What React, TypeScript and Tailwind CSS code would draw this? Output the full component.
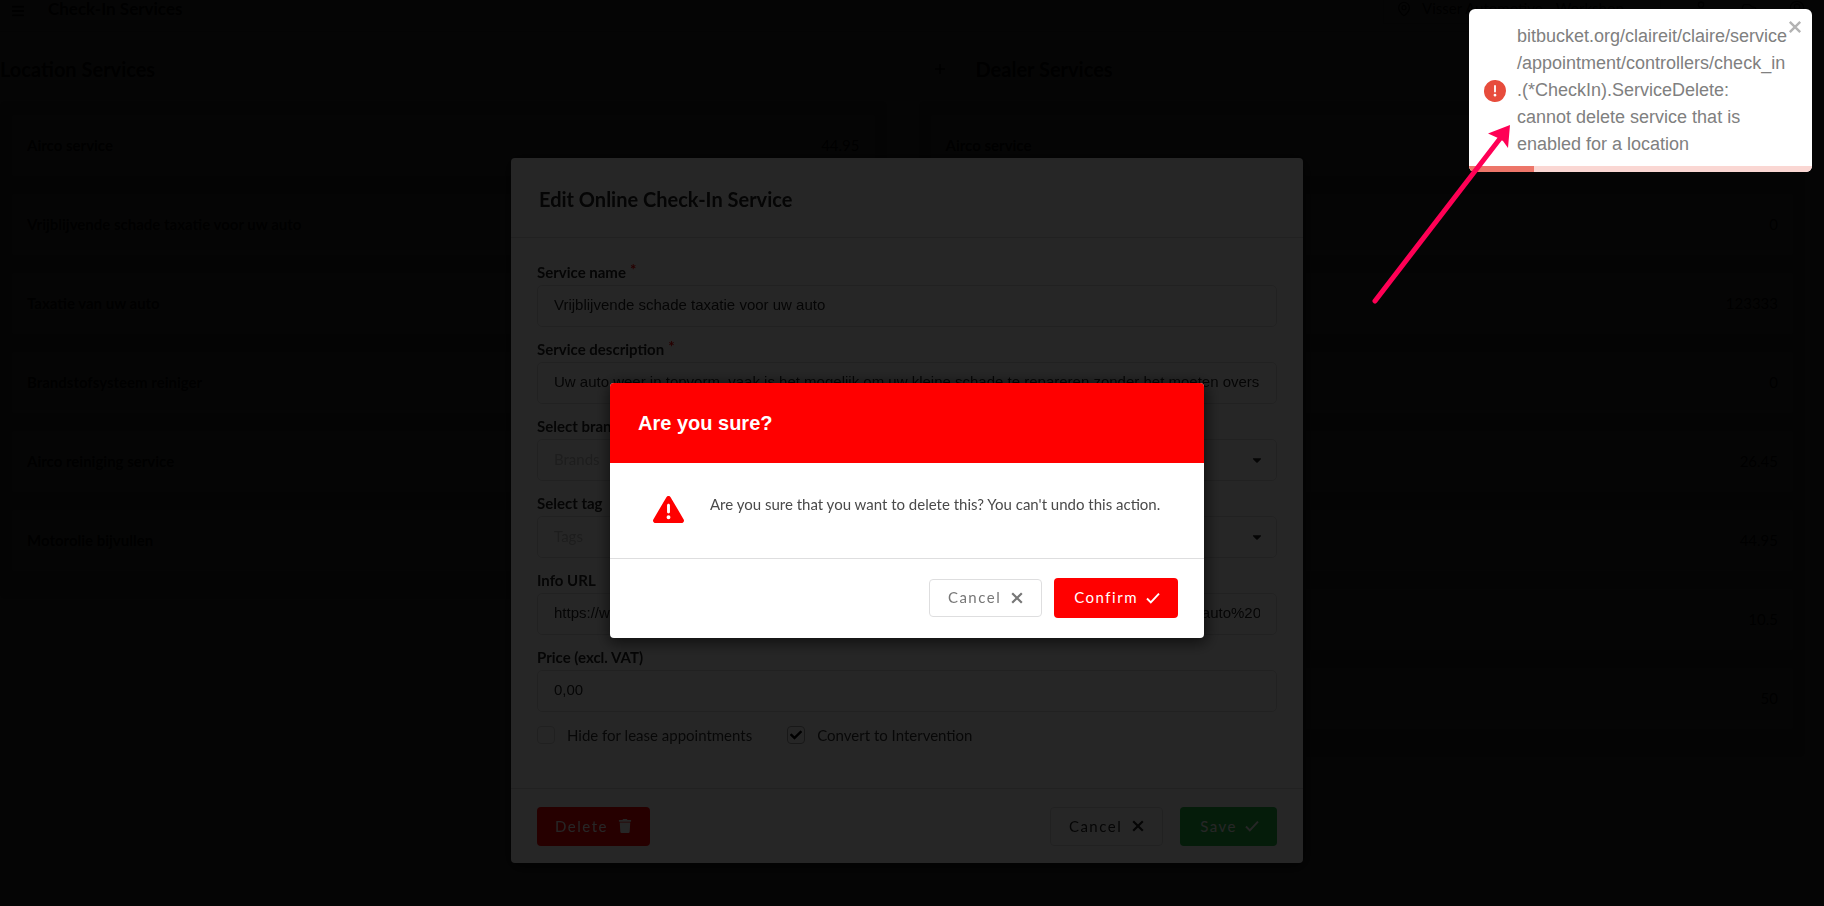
import React from "react";
import { FaCheck, FaTrash, FaBars, FaCaretDown } from "react-icons/fa";
import { FaTriangleExclamation } from "react-icons/fa6";
import { MapPin, Plus, User, Car, CircleUserRound } from "lucide-react";

type Service = { name: string; price: string };

const locationServices: Service[] = [
  { name: "Airco service", price: "44.95" },
  { name: "Vrijblijvende schade taxatie voor uw auto", price: "0" },
  { name: "Taxatie van uw auto", price: "123333" },
  { name: "Brandstofsysteem reiniger", price: "0" },
  { name: "Airco reiniging service", price: "26.45" },
  { name: "Motorolie bijvullen", price: "" },
];

const dealerServices: Service[] = [
  { name: "Airco service", price: "44.95" },
  { name: "Vrijblijvende schade taxatie", price: "0" },
  { name: "Taxatie van uw auto", price: "123333" },
  { name: "Brandstofsysteem", price: "0" },
  { name: "Airco reiniging service", price: "26.45" },
  { name: "Motorolie bijvullen", price: "44.95" },
  { name: "Ruitenwissers", price: "10.5" },
  { name: "Wielwissel", price: "50" },
];

function CrossIcon() {
  return (
    <svg viewBox="0 0 12 12" className="size-3" aria-hidden="true">
      <path d="M1.2 1.2l9.6 9.6M10.8 1.2l-9.6 9.6" stroke="currentColor" strokeWidth="2.2" />
    </svg>
  );
}

function TickIcon() {
  return (
    <svg viewBox="0 0 14 12" className="h-3 w-3.5" aria-hidden="true">
      <path d="M1 6.5l3.8 3.8L13 1.6" stroke="currentColor" strokeWidth="1.9" fill="none" />
    </svg>
  );
}

function ServiceList({ items }: { items: Service[] }) {
  return (
    <ul className="flex flex-col gap-[18px] rounded bg-[#d4d4d5] px-3 pt-[14px] pb-7">
      {items.map((s) => (
        <li key={s.name} className="flex h-[61px] items-center justify-between rounded bg-white px-[15px] text-[15px] font-bold">
          <span>{s.name}</span>
          <span className="font-normal">{s.price}</span>
        </li>
      ))}
    </ul>
  );
}

function Page() {
  return (
    <div className="min-h-screen bg-white text-black">
      <header className="flex h-8 items-start justify-between border-b border-[#d4d4d5] pr-[19px] pl-[11px]">
        <div className="flex items-center gap-[23px]">
          <button type="button" aria-label="Menu" className="pt-[3px]">
            <FaBars size={14} />
          </button>
          <h1 className="text-[17px] leading-[18px] font-bold">Check-In Services</h1>
        </div>
        <div className="flex items-start gap-8">
          <button type="button" className="flex h-6 w-[278px] items-center gap-2.5 border border-t-0 border-[#d4d4d5] px-3 pb-1.5 text-[15px] whitespace-nowrap">
            <MapPin size={16} />
            Visser Automotive - Workshop
          </button>
          <User size={16} />
          <Car size={16} />
          <CircleUserRound size={16} />
        </div>
      </header>
      <main className="grid grid-cols-2 gap-8 pr-[19px]">
        <section>
          <div className="flex h-[69px] items-center pt-1">
            <h2 className="text-[20px] font-bold">Location Services</h2>
          </div>
          <ServiceList items={locationServices} />
        </section>
        <section>
          <div className="flex h-[69px] items-center gap-[14px] pt-1">
            <button type="button" aria-label="Add service" className="flex h-[37px] w-[43px] items-center justify-center rounded border border-[#e8e8e8]">
              <Plus size={16} />
            </button>
            <h2 className="text-[20px] font-bold">Dealer Services</h2>
          </div>
          <ServiceList items={dealerServices} />
        </section>
      </main>
    </div>
  );
}

const inputClass =
  "h-[42px] w-full rounded-[5px] border border-[#dededf] bg-white px-4 pb-[3px] font-['Liberation_Sans',sans-serif] text-[15px] text-[#222] outline-none";
const labelClass = "mb-[3px] block h-5 text-[15px] leading-5 font-bold text-[#222]";

function TextField({ id, label, value, required }: { id: string; label: string; value: string; required?: boolean }) {
  return (
    <div>
      <label htmlFor={id} className={labelClass}>
        {label}
        {required && <span className="ml-1 align-[3px] leading-none text-[#ff0000]">*</span>}
      </label>
      <input id={id} type="text" defaultValue={value} className={inputClass} />
    </div>
  );
}

function SelectField({ id, label, placeholder }: { id: string; label: string; placeholder: string }) {
  return (
    <div>
      <label htmlFor={id} className={labelClass}>{label}</label>
      <div className="relative">
        <select id={id} className="h-[42px] w-full appearance-none rounded-[5px] border border-[#dededf] bg-white px-4 pb-[2px] text-[15px] text-[#bfbfbf] outline-none">
          <option>{placeholder}</option>
        </select>
        <FaCaretDown size={14} className="pointer-events-none absolute top-3.5 right-[13px] text-[#222]" />
      </div>
    </div>
  );
}

function CheckField({ label, checked }: { label: string; checked?: boolean }) {
  return (
    <label className="flex items-center gap-3 text-[15px] leading-5 text-[#333]">
      <span className="relative flex size-[18px]">
        <input type="checkbox" defaultChecked={checked} className="peer size-[18px] appearance-none rounded-[4px] border border-[#d4d4d5] checked:border-[#a0a0a0]" />
        <FaCheck size={12} className="pointer-events-none absolute top-[3px] left-[3px] hidden text-black peer-checked:block" />
      </span>
      {label}
    </label>
  );
}

const URL_VALUE =
  "https://www.visserautomotive.nl/werkplaatsen/schadeherstel/vrijblijvende-schade-taxatie-voor-uw-auto%20";

function EditModal() {
  return (
    <form className="flex w-[792px] flex-col rounded bg-white shadow-[1px_3px_15px_2px_rgba(0,0,0,0.6)]">
      <h2 className="flex h-20 items-center border-b border-[#dededf] px-7 pt-[3px] text-[20px] font-bold text-[#222]">Edit Online Check-In Service</h2>
      <div className="flex flex-col px-[26px] pt-6">
        <div className="flex flex-col gap-3">
          <TextField id="name" label="Service name" value="Vrijblijvende schade taxatie voor uw auto" required />
          <TextField
            id="description"
            label="Service description"
            value="Uw auto weer in topvorm, vaak is het mogelijk om uw kleine schade te repareren zonder het moeten overspuiten"
            required
          />
          <SelectField id="brands" label="Select brands" placeholder="Brands" />
          <SelectField id="tags" label="Select tag" placeholder="Tags" />
          <TextField id="url" label="Info URL" value={URL_VALUE} />
          <TextField id="price" label="Price (excl. VAT)" value="0,00" />
        </div>
        <div className="flex h-[76px] gap-[35px] pt-[13px]">
          <div><CheckField label="Hide for lease appointments" /></div>
          <div><CheckField label="Convert to Intervention" checked /></div>
        </div>
      </div>
      <div className="flex h-[75px] items-center justify-between border-t border-[#dededf] px-[26px]">
        <button type="button" className="flex h-[39px] items-center gap-2.5 rounded bg-[#ff0000] px-[18px] text-[15px] tracking-widest text-white">
          Delete <FaTrash size={14} />
        </button>
        <div className="flex gap-[17px]">
          <button type="button" className="flex h-[39px] items-center gap-2.5 rounded border border-[#dededf] px-[18px] text-[15px] tracking-widest text-[#222]">
            Cancel <CrossIcon />
          </button>
          <button type="submit" className="flex h-[39px] items-center gap-2 rounded bg-[#21ba45] pr-[18px] pl-5 text-[15px] tracking-widest text-white">
            Save <TickIcon />
          </button>
        </div>
      </div>
    </form>
  );
}

function ConfirmModal() {
  return (
    <div role="alertdialog" aria-labelledby="confirm-title" className="w-[594px] overflow-hidden rounded bg-white shadow-[1px_3px_15px_2px_rgba(0,0,0,0.6)]">
      <h2 id="confirm-title" className="flex h-20 items-center bg-[#ff0000] px-7 font-['Liberation_Sans',sans-serif] text-[20px] font-bold text-white">
        Are you sure?
      </h2>
      <div className="flex h-[95px] items-start gap-[26px] pt-[31px] pl-[43px]">
        <FaTriangleExclamation size={31} className="text-[#ff0000]" />
        <p className="text-[15px] leading-5 text-[#4a4a4a]">Are you sure that you want to delete this? You can't undo this action.</p>
      </div>
      <div className="flex h-20 items-center justify-end gap-3 border-t border-[#dededf] px-[26px] pb-[2px]">
        <button type="button" className="flex h-[38px] items-center gap-2.5 rounded border border-[#dededf] px-[18px] text-[15px] tracking-widest text-[#777]">
          Cancel <CrossIcon />
        </button>
        <button type="button" className="flex h-10 items-center gap-2 rounded bg-[#ff0000] pr-[18px] pl-5 text-[15px] tracking-widest text-white">
          Confirm <TickIcon />
        </button>
      </div>
    </div>
  );
}

function Toast() {
  return (
    <div role="alert" className="fixed top-[9px] right-3 z-30 w-[343px] overflow-hidden rounded-md bg-white font-['Liberation_Sans',sans-serif]">
      <div className="flex items-center gap-[11px] pt-[14px] pb-2 pl-[15px]">
        <svg viewBox="0 0 24 24" className="size-[22px] shrink-0 fill-[#e74c3c]">
          <path d="M11.983 0a12.206 12.206 0 00-8.51 3.653A11.8 11.8 0 000 12.207 11.779 11.779 0 0011.8 24h.214A12.111 12.111 0 0024 11.791 11.766 11.766 0 0011.983 0zM10.5 16.542a1.476 1.476 0 011.449-1.53h.027a1.527 1.527 0 011.523 1.47 1.475 1.475 0 01-1.449 1.53h-.027a1.529 1.529 0 01-1.523-1.47zM11 12.5v-6a1 1 0 012 0v6a1 1 0 11-2 0z" />
        </svg>
        <p className="text-[18px] leading-[27px] whitespace-nowrap text-[#808080]">
          bitbucket.org/claireit/claire/service<br />
          /appointment/controllers/check_in<br />
          .(*CheckIn).ServiceDelete:<br />
          cannot delete service that is<br />
          enabled for a location
        </p>
      </div>
      <button type="button" aria-label="Close" className="absolute top-[11px] right-2.5 text-[#b3b3b3]">
        <svg viewBox="0 0 14 14" className="size-[14px]">
          <path d="M1.8 1.8l10.4 10.4M12.2 1.8L1.8 12.2" stroke="currentColor" strokeWidth="2.4" />
        </svg>
      </button>
      <div className="h-1.5 bg-[#fad7d3]">
        <div className="h-full w-[19%] bg-[#ed7669]" />
      </div>
    </div>
  );
}

export default function App() {
  return (
    <div className="font-[Lato,sans-serif]">
      <Page />
      <div className="fixed inset-0 z-10 flex items-center justify-center bg-black/85 pt-[115px] pr-[10px]">
        <EditModal />
      </div>
      <div className="fixed inset-0 z-20 flex items-center justify-center bg-black/85 pt-[115px] pr-[10px]">
        <ConfirmModal />
      </div>
      <Toast />
      <svg viewBox="0 0 150 190" className="pointer-events-none fixed top-[120px] right-[309px] z-40 h-[190px] w-[150px]">
        <path d="M10 181L137 16" stroke="#ff0055" strokeWidth="5" strokeLinecap="round" />
        <path d="M145 5L123 13.5L133 18L138 21L143 28Z" fill="#ff0055" />
      </svg>
    </div>
  );
}
